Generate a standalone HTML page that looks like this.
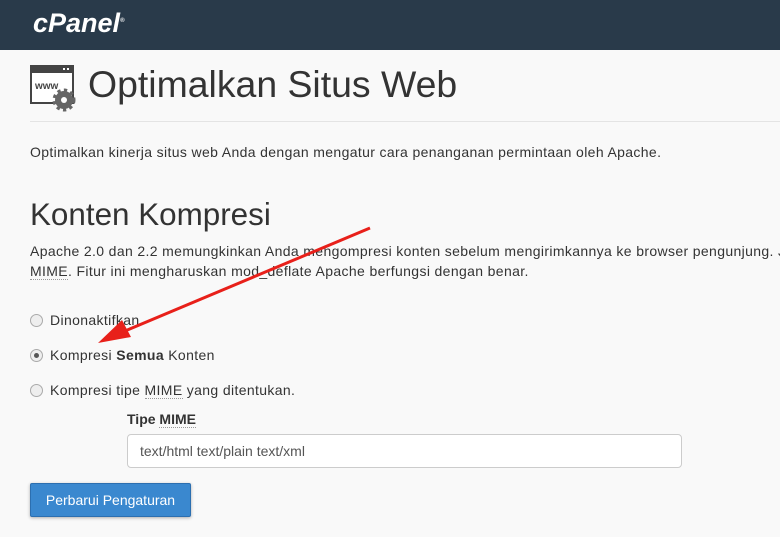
<!DOCTYPE html>
<html><head><meta charset="utf-8"><style>
body{margin:0;width:780px;height:537px;overflow:hidden;background:#f9f9f9;font-family:"Liberation Sans",sans-serif;color:#333;position:relative}
.hdr{height:50px;background:#293a4a;position:relative}
.logo{position:absolute;left:33px;top:8px;color:#fff;font-weight:bold;font-style:italic;font-size:27px;letter-spacing:0px}
.t{position:absolute;left:88px;top:63px;font-size:37.4px;color:#333}
.hr{position:absolute;left:30px;right:0;top:121px;border-top:1px solid #e4e4e4}
.p{position:absolute;left:30px;font-size:14px;white-space:nowrap;letter-spacing:0.36px}
.h2{position:absolute;left:30px;top:197px;font-size:31.4px}
.r{position:absolute;left:30px;font-size:14px;white-space:nowrap;letter-spacing:0.36px}
.r i{display:inline-block;width:11px;height:11px;border:1px solid #aaa;border-radius:50%;background:#eee;vertical-align:-2px;margin-right:7px;position:relative}
.r i.on:after{content:"";position:absolute;left:3px;top:3px;width:5px;height:5px;border-radius:50%;background:#555}
abbr{text-decoration:none;border-bottom:1px dotted #999}
.inp{position:absolute;left:127px;top:434px;width:555px;height:34px;background:#fff;border:1px solid #ccc;border-radius:4px;box-sizing:border-box;padding:8px 12px;font-size:14px;color:#555}
.btn{position:absolute;left:30px;top:483px;width:161px;height:34px;background:#3a88cf;border:1px solid #2c6fb0;border-radius:2px;color:#fff;font-size:14px;text-align:center;line-height:32px;box-sizing:border-box;box-shadow:0 1px 3px rgba(0,0,0,.3)}
</style></head><body>
<div class="hdr"><div class="logo">cPanel<sup style="font-size:6px">®</sup></div></div>
<svg style="position:absolute;left:30px;top:65px" width="48" height="48" viewBox="0 0 48 48">
<rect x="1" y="1" width="42" height="37" fill="#fff" stroke="#444" stroke-width="2"/>
<rect x="1" y="1" width="42" height="7" fill="#444"/>
<rect x="33" y="3" width="2" height="2" fill="#fff"/><rect x="37" y="3" width="2" height="2" fill="#fff"/>
<text x="5" y="24" font-family="Liberation Sans" font-weight="bold" font-size="10" fill="#444">www</text>
<circle cx="34" cy="35" r="9" fill="#666" stroke="#666" stroke-width="5" stroke-dasharray="3 3"/>
<circle cx="34" cy="35" r="8" fill="#666"/><circle cx="34" cy="35" r="3" fill="#fff"/>
</svg>
<div class="t">Optimalkan Situs Web</div>
<div class="hr"></div>
<div class="p" style="top:144px">Optimalkan kinerja situs web Anda dengan mengatur cara penanganan permintaan oleh Apache.</div>
<div class="h2">Konten Kompresi</div>
<div class="p" style="top:243px">Apache 2.0 dan 2.2 memungkinkan Anda mengompresi konten sebelum mengirimkannya ke browser pengunjung. Jenis</div>
<div class="p" style="top:263px"><abbr>MIME</abbr>. Fitur ini mengharuskan mod_deflate Apache berfungsi dengan benar.</div>
<div class="r" style="top:312px"><i></i>Dinonaktifkan</div>
<div class="r" style="top:347px"><i class="on"></i>Kompresi <b>Semua</b> Konten</div>
<div class="r" style="top:382px"><i></i>Kompresi tipe <abbr>MIME</abbr> yang ditentukan.</div>
<div class="p" style="left:127px;top:411px;font-weight:bold;letter-spacing:0">Tipe <abbr>MIME</abbr></div>
<div class="inp">text/html text/plain text/xml</div>
<div class="btn">Perbarui Pengaturan</div>
<svg style="position:absolute;left:0;top:0" width="780" height="537">
<line x1="370" y1="228" x2="125" y2="331" stroke="#e8201a" stroke-width="3"/>
<polygon points="98,343 122,320 131,337" fill="#e8201a"/>
</svg>
</body></html>
